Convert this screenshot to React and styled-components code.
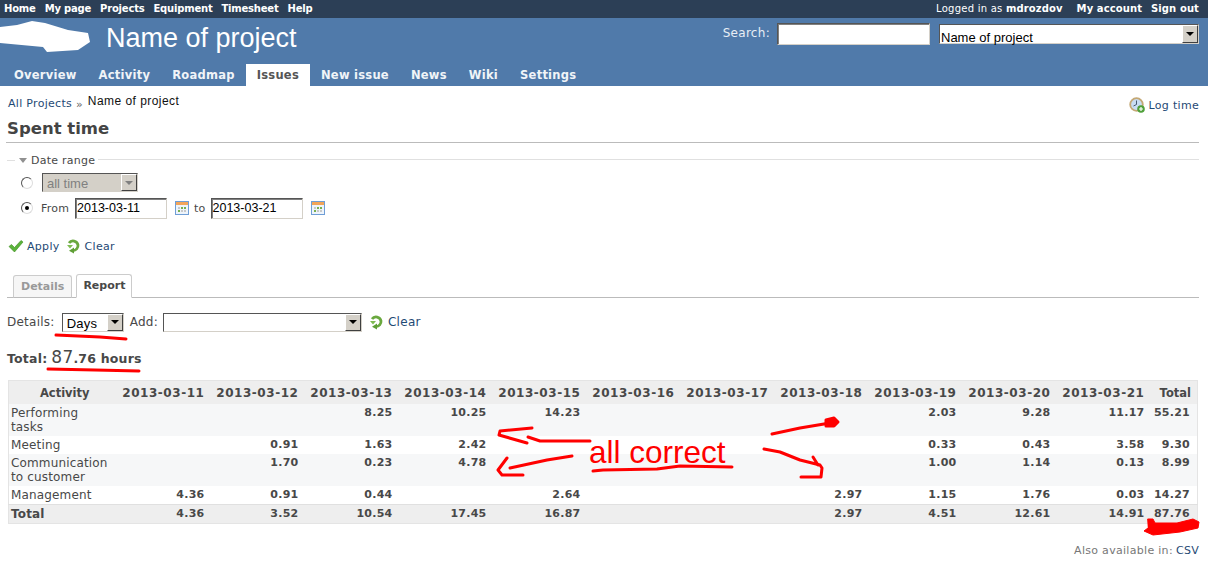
import styled, { createGlobalStyle } from "styled-components";

const GlobalStyle = createGlobalStyle`
  html, body {
    margin: 0;
    padding: 0;
    background: #fff;
    color: #484848;
    font-family: "DejaVu Sans", Verdana, sans-serif;
    font-size: 11px;
  }
`;

const Page = styled.div`
  position: relative;
  width: 1208px;
  height: 575px;
  overflow: hidden;
`;

const TopMenu = styled.div`
  height: 18px;
  background: #2c3f56;
  display: flex;
  justify-content: space-between;
  align-items: center;
  padding: 0 9px 2px 4px;
  box-sizing: border-box;
  color: #fff;
  font-size: 10px;
`;

const TopLinks = styled.div`
  display: flex;
  gap: 9px;
  font-weight: bold;
  letter-spacing: ${(p) => p.$ls}px;
`;

const LoggedAs = styled.span`
  font-weight: normal;
  letter-spacing: 0.25px;
  margin-right: 5px;
  b {
    font-weight: bold;
    letter-spacing: 0.1px;
  }
`;

const Header = styled.div`
  height: 68px;
  background: #507aaa;
  display: flex;
  flex-direction: column;
  justify-content: space-between;
`;

const HeaderTop = styled.div`
  display: flex;
  justify-content: space-between;
  align-items: flex-start;
  padding: 0 9px 0 0;
`;

const Brand = styled.div`
  display: flex;
  align-items: center;
  height: 40px;
`;

const Title = styled.h1`
  margin: 0 0 0 106px;
  font: normal 27px "Liberation Sans", Arial, sans-serif;
  color: #fff;
`;

const Blob = styled.svg`
  position: absolute;
  left: 0;
  top: 20px;
`;

const QuickSearch = styled.div`
  display: flex;
  align-items: flex-start;
  padding-top: 5px;
  color: #e8eef5;
  font-size: 12px;
`;

const SearchLabel = styled.span`
  margin-right: 7px;
  line-height: 20px;
  letter-spacing: 0.3px;
`;

const Field = styled.div`
  box-sizing: border-box;
  width: ${(p) => p.$w}px;
  height: ${(p) => p.$h || 22}px;
  border: 1px solid;
  border-color: #555 #d4d0c8 #d4d0c8 #555;
  box-shadow: inset 1px 1px 0 #808080;
  background: #fff;
  color: #000;
  font: 12.5px/${(p) => (p.$h || 22) - 3}px "Liberation Sans", Arial, sans-serif;
  padding-left: 1px;
  white-space: nowrap;
`;

const SelectBox = styled.div`
  box-sizing: border-box;
  width: ${(p) => p.$w}px;
  height: ${(p) => p.$h || 19}px;
  margin: ${(p) => p.$m || "0"};
  flex: none;
  border: 1px solid;
  border-color: #555 #d4d0c8 #d4d0c8 #555;
  background: ${(p) => (p.$disabled ? "#d4d0c8" : "#fff")};
  color: ${(p) => (p.$disabled ? "#808080" : "#000")};
  display: flex;
  align-items: stretch;
  justify-content: space-between;
  font: 13px "Liberation Sans", Arial, sans-serif;
`;

const SelectText = styled.span`
  padding-left: ${(p) => p.$pl || 4}px;
  line-height: ${(p) => p.$lh || 20}px;
  white-space: nowrap;
`;

const SelectArrow = styled.span`
  width: 16px;
  flex: none;
  background: #d4d0c8;
  border: 1px solid;
  border-color: #fff #404040 #404040 #fff;
  box-sizing: border-box;
  display: flex;
  align-items: center;
  justify-content: center;
  &::after {
    content: "";
    border: 4px solid transparent;
    border-top: 4px solid ${(p) => (p.$disabled ? "#808080" : "#000")};
    border-bottom: 0;
  }
`;

const Tabs = styled.div`
  display: flex;
  height: 22px;
  padding-left: 3px;
  font-size: 11.5px;
  font-weight: bold;
  letter-spacing: 0.25px;
`;

const MainTab = styled.a`
  display: block;
  padding: 0 11px;
  line-height: 22px;
  color: ${(p) => (p.$active ? "#555" : "#f0f4f8")};
  background: ${(p) => (p.$active ? "#fff" : "transparent")};
`;

const Content = styled.div`
  padding: 0 9px 0 7px;
`;

const BreadRow = styled.div`
  display: flex;
  justify-content: space-between;
  height: 33px;
  padding-top: 11px;
  box-sizing: border-box;
`;

const Crumbs = styled.div`
  display: flex;
  align-items: flex-start;
  padding-left: 1px;
`;

const Lnk = styled.a`
  color: #1f4a75;
  letter-spacing: 0.3px;
`;

const CrumbSep = styled.span`
  margin: 1px 5px 0 4px;
  color: #666;
`;

const CrumbHere = styled.span`
  font: 12px "Liberation Sans", Arial, sans-serif;
  color: #111;
  position: relative;
  top: -3px;
  letter-spacing: 0.45px;
`;

const LogTime = styled.div`
  display: flex;
  align-items: center;
  gap: 4px;
  height: 16px;
`;

const PageTitle = styled.h2`
  margin: 0 0 0 -1px;
  height: 23px;
  padding-left: 1px;
  border-bottom: 1px solid #bbb;
  font-size: 16.5px;
  line-height: 20px;
  font-weight: bold;
  color: #444;
  box-sizing: content-box;
`;

const Legend = styled.div`
  display: flex;
  align-items: center;
  height: 14px;
  margin-top: 10px;
  color: #484848;
  letter-spacing: 0.25px;
  &::before {
    content: "";
    width: 8px;
    border-top: 1px solid #e0e0e0;
    margin-right: 4px;
  }
  &::after {
    content: "";
    flex: 1;
    border-top: 1px solid #e0e0e0;
    margin-left: 3px;
    position: relative;
    top: -1px;
  }
`;

const Caret = styled.span`
  width: 0;
  height: 0;
  border: 4px solid transparent;
  border-top: 5px solid #909090;
  border-bottom: 0;
  margin-right: 4px;
`;

const Range = styled.div`
  display: flex;
  flex-direction: column;
  gap: 5px;
  padding: 6px 0 0 14px;
`;

const RangeRow = styled.div`
  display: flex;
  align-items: center;
  height: ${(p) => p.$h}px;
`;

const Radio = styled.span`
  box-sizing: border-box;
  width: 12px;
  height: 12px;
  border-radius: 50%;
  border: 1px solid;
  border-color: #555 #ddd #ddd #555;
  background: #fff;
  margin-right: 9px;
  display: flex;
  align-items: center;
  justify-content: center;
  &::after {
    content: "";
    width: 4px;
    height: 4px;
    border-radius: 50%;
    background: ${(p) => (p.$on ? "#000" : "transparent")};
  }
`;

const RangeLabel = styled.span`
  margin: ${(p) => p.$m};
  letter-spacing: 0.2px;
`;

const Actions = styled.div`
  display: flex;
  align-items: center;
  height: 16px;
  margin: 19px 0 0 1px;
`;

const IconSlot = styled.span`
  display: inline-flex;
  margin: ${(p) => p.$m || "0 4px 0 0"};
`;

const TabBar = styled.div`
  display: flex;
  align-items: flex-end;
  gap: 4px;
  height: 24px;
  margin-top: 19px;
  padding-left: 6px;
  border-bottom: 1px solid #bbb;
`;

const TabItem = styled.div`
  box-sizing: border-box;
  height: ${(p) => (p.$active ? 24 : 23)}px;
  margin-bottom: -1px;
  padding: 0 ${(p) => (p.$active ? 6 : 7)}px;
  line-height: 21px;
  font-weight: bold;
  border: 1px solid #ccc;
  border-bottom-color: ${(p) => (p.$active ? "#fff" : "#bbb")};
  border-radius: 3px 3px 0 0;
  background: ${(p) => (p.$active ? "#fff" : "#f6f6f6")};
  color: ${(p) => (p.$active ? "#484848" : "#999")};
`;

const DetailsRow = styled.div`
  display: flex;
  align-items: center;
  height: 20px;
  margin-top: 14px;
  font-size: 12px;
  letter-spacing: 0.25px;
`;

const TotalLine = styled.div`
  margin-top: 15px;
  height: 20px;
  display: flex;
  align-items: baseline;
  font-size: 12.5px;
  font-weight: bold;
  letter-spacing: 0.2px;
  color: #484848;
`;

const BigNum = styled.span`
  font-size: 17px;
  font-weight: normal;
  margin-left: 4px;
`;

const Decimals = styled.span`
  font-size: 12.5px;
  font-weight: bold;
`;

const Table = styled.table`
  width: 1190px;
  margin: 13px 0 0 1px;
  border: 1px solid #e4e4e4;
  border-collapse: collapse;
  table-layout: fixed;
  color: #484848;
`;

const Th = styled.th`
  background: #eee;
  height: 23px;
  padding: 0 ${(p) => (p.$last ? 6 : p.$first ? 0 : 4)}px 0 ${(p) => (p.$first ? 6 : 0)}px;
  text-align: ${(p) => (p.$first ? "center" : "right")};
  font-size: ${(p) => (p.$first || p.$last ? 11.5 : 12)}px;
  letter-spacing: ${(p) => (p.$first || p.$last ? 0 : 0.55)}px;
  font-weight: bold;
`;

const Row = styled.tr`
  background: ${(p) => (p.$total ? "#eee" : p.$odd ? "#f6f7f8" : "#fff")};
  ${(p) => p.$total && "border-top: 1px solid #e0e0e0;"}
`;

const NameCell = styled.td`
  padding: 2px 0 2px 2px;
  vertical-align: top;
  font-size: 12px;
  line-height: 14px;
  font-weight: ${(p) => (p.$total ? "bold" : "normal")};
  letter-spacing: 0.15px;
`;

const Hours = styled.td`
  padding: 2px ${(p) => (p.$last ? 7 : 4)}px 0 0;
  vertical-align: top;
  text-align: right;
  font-weight: bold;
  font-size: 11px;
  line-height: 14px;
  letter-spacing: 0.25px;
`;

const Footer = styled.div`
  display: flex;
  justify-content: flex-end;
  margin-top: 20px;
  color: #777;
  letter-spacing: 0.3px;
  gap: 3px;
`;

const Scribble = styled.svg`
  position: absolute;
  left: 0;
  top: 0;
  pointer-events: none;
`;

const Note = styled.span`
  position: absolute;
  left: 589px;
  top: 432px;
  font: 31.5px/40px "Liberation Sans", Arial, sans-serif;
  color: #f00;
`;

const CheckIcon = () => (
  <svg width="16" height="16" viewBox="0 0 16 16">
    <path d="M1 8.5 L3.5 6.5 L6.5 9.5 L13 2.5 L15 4 L6.5 14 Z" fill="#5bb33c" stroke="#3d8a1c" strokeWidth="0.6" />
  </svg>
);

const ReloadIcon = () => (
  <svg width="16" height="16" viewBox="0 0 16 16" fill="none">
    <path d="M4 5 A5 5 0 0 1 13 7 A5 5 0 0 1 8 12.5" stroke="#6aa83e" strokeWidth="2.8" />
    <path d="M2 7 L8 7 L5 10.5 Z" fill="#7fbb52" />
    <path d="M9 9.5 L4 12.7 L9 15.5 Z" fill="#5f9e36" />
  </svg>
);

const CalendarIcon = () => (
  <svg width="14" height="14" viewBox="0 0 14 14">
    <rect x="0.5" y="0.5" width="13" height="13" fill="#eef4fb" stroke="#6f9ed6" />
    <rect x="1" y="1" width="12" height="3" fill="#f2a55a" />
    <rect x="3" y="6" width="2" height="2" fill="#c9c9c9" />
    <rect x="6" y="6" width="2" height="2" fill="#78b04e" />
    <rect x="9" y="6" width="2" height="2" fill="#78b04e" />
    <rect x="3" y="9" width="2" height="2" fill="#78b04e" />
    <rect x="6" y="9" width="2" height="2" fill="#c9c9c9" />
    <rect x="9" y="9" width="2" height="2" fill="#c9c9c9" />
  </svg>
);

const ClockIcon = () => (
  <svg width="16" height="16" viewBox="0 0 16 16">
    <circle cx="7.5" cy="7.5" r="6.3" fill="#c8dcf2" stroke="#c4a875" strokeWidth="1.8" />
    <path d="M7.5 3.5 V7.5 L4.5 9" stroke="#46586e" strokeWidth="1" fill="none" />
    <circle cx="12" cy="12" r="3.8" fill="#4fa03a" />
    <path d="M12 10 V14 M10 12 H14" stroke="#fff" strokeWidth="1.2" />
  </svg>
);

const dates = [
  "2013-03-11", "2013-03-12", "2013-03-13", "2013-03-14", "2013-03-15", "2013-03-16",
  "2013-03-17", "2013-03-18", "2013-03-19", "2013-03-20", "2013-03-21",
];

const rows = [
  { name: <>Performing<br />tasks</>, v: ["", "", "8.25", "10.25", "14.23", "", "", "", "2.03", "9.28", "11.17", "55.21"] },
  { name: "Meeting", v: ["", "0.91", "1.63", "2.42", "", "", "", "", "0.33", "0.43", "3.58", "9.30"] },
  { name: <>Communication<br />to customer</>, v: ["", "1.70", "0.23", "4.78", "", "", "", "", "1.00", "1.14", "0.13", "8.99"] },
  { name: "Management", v: ["4.36", "0.91", "0.44", "", "2.64", "", "", "2.97", "1.15", "1.76", "0.03", "14.27"] },
];

const totals = ["4.36", "3.52", "10.54", "17.45", "16.87", "", "", "2.97", "4.51", "12.61", "14.91", "87.76"];

export default function App() {
  return (
    <Page>
      <GlobalStyle />
      <TopMenu>
        <TopLinks $ls={-0.2}>
          <span>Home</span>
          <span>My page</span>
          <span>Projects</span>
          <span>Equipment</span>
          <span>Timesheet</span>
          <span>Help</span>
        </TopLinks>
        <TopLinks $ls={0.1}>
          <LoggedAs>Logged in as <b>mdrozdov</b></LoggedAs>
          <span>My account</span>
          <span>Sign out</span>
        </TopLinks>
      </TopMenu>
      <Header>
        <HeaderTop>
          <Brand>
            <Title>Name of project</Title>
          </Brand>
          <QuickSearch>
            <SearchLabel>Search:</SearchLabel>
            <Field $w={153} />
            <SelectBox $w={260} $h={20} $m="1px 0 0 9px">
              <SelectText $pl={1} $lh={26}>Name of project</SelectText>
              <SelectArrow />
            </SelectBox>
          </QuickSearch>
        </HeaderTop>
        <Tabs>
          <MainTab>Overview</MainTab>
          <MainTab>Activity</MainTab>
          <MainTab>Roadmap</MainTab>
          <MainTab $active>Issues</MainTab>
          <MainTab>New issue</MainTab>
          <MainTab>News</MainTab>
          <MainTab>Wiki</MainTab>
          <MainTab>Settings</MainTab>
        </Tabs>
      </Header>
      <Blob width="92" height="34" viewBox="0 0 92 34">
        <path d="M0 7 L17 5 L32 1 L45 3 L68 10 L88 13 L90 22 L78 30 L47 32 L43 27 L0 23 Z" fill="#fff" />
      </Blob>
      <Content>
        <BreadRow>
          <Crumbs>
            <Lnk>All Projects</Lnk>
            <CrumbSep>»</CrumbSep>
            <CrumbHere>Name of project</CrumbHere>
          </Crumbs>
          <LogTime>
            <ClockIcon />
            <Lnk>Log time</Lnk>
          </LogTime>
        </BreadRow>
        <PageTitle>Spent time</PageTitle>
        <Legend>
          <Caret />
          Date range
        </Legend>
        <Range>
          <RangeRow $h={19}>
            <Radio />
            <SelectBox $w={96} $disabled>
              <SelectText>all time</SelectText>
              <SelectArrow $disabled />
            </SelectBox>
          </RangeRow>
          <RangeRow $h={22}>
            <Radio $on />
            <RangeLabel $m="0 6px 0 -1px">From</RangeLabel>
            <Field $w={92} $h={21}>2013-03-11</Field>
            <IconSlot $m="0 5px 0 8px"><CalendarIcon /></IconSlot>
            <RangeLabel $m="0 5px 0 0">to</RangeLabel>
            <Field $w={92} $h={21}>2013-03-21</Field>
            <IconSlot $m="0 0 0 8px"><CalendarIcon /></IconSlot>
          </RangeRow>
        </Range>
        <Actions>
          <IconSlot $m="0 3px 0 0"><CheckIcon /></IconSlot>
          <Lnk>Apply</Lnk>
          <IconSlot $m="0 4px 0 5px"><ReloadIcon /></IconSlot>
          <Lnk>Clear</Lnk>
        </Actions>
        <TabBar>
          <TabItem>Details</TabItem>
          <TabItem $active>Report</TabItem>
        </TabBar>
        <DetailsRow>
          <span>Details:</span>
          <SelectBox $w={62} $m="0 6px 0 7px">
            <SelectText>Days</SelectText>
            <SelectArrow />
          </SelectBox>
          <span>Add:</span>
          <SelectBox $w={199} $m="0 6px 0 5px">
            <SelectText />
            <SelectArrow />
          </SelectBox>
          <IconSlot $m="0 4px 0 0"><ReloadIcon /></IconSlot>
          <Lnk>Clear</Lnk>
        </DetailsRow>
        <TotalLine>
          Total:
          <BigNum>87<Decimals>.76 hours</Decimals></BigNum>
        </TotalLine>
        <Table>
          <colgroup>
            <col style={{ width: 106 }} />
            {dates.map((d) => <col key={d} style={{ width: 94 }} />)}
            <col />
          </colgroup>
          <thead>
            <tr>
              <Th $first>Activity</Th>
              {dates.map((d) => <Th key={d}>{d}</Th>)}
              <Th $last>Total</Th>
            </tr>
          </thead>
          <tbody>
            {rows.map((r, i) => (
              <Row key={i} $odd={i % 2 === 0}>
                <NameCell>{r.name}</NameCell>
                {r.v.map((x, j) => <Hours key={j} $last={j === 11}>{x}</Hours>)}
              </Row>
            ))}
            <Row $total>
              <NameCell $total>Total</NameCell>
              {totals.map((x, j) => <Hours key={j} $last={j === 11}>{x}</Hours>)}
            </Row>
          </tbody>
        </Table>
        <Footer>
          Also available in: <Lnk>CSV</Lnk>
        </Footer>
      </Content>
      <Note>all correct</Note>
      <Scribble width="1208" height="575" viewBox="0 0 1208 575" fill="none" stroke="#f00" strokeWidth="3" strokeLinejoin="round" strokeLinecap="round">
        <path d="M56 335 L100 337 L126 339" />
        <path d="M48 369 L95 370 L139 371" />
        <path d="M593 471 L603 470 L657 469 L680 466 L732 467" />
        <path d="M590 441 L540 441 L528 437" />
        <path d="M532 428 L500 431 L499 435 L527 443" />
        <path d="M572 456 L547 460 L510 468" />
        <path d="M507 458 L498 470 L502 475 L523 475" />
        <path d="M772 434 L800 428 L830 423" />
        <path d="M826 420 L834 418 L838 422 L834 426 L826 426 Z" fill="#f00" />
        <path d="M764 449 L780 452 L800 460 L820 465 L822 468 L821 477 L801 477" />
        <path d="M813 457 L818 465" />
        <path d="M1148 519 L1153 519 L1155 523 L1177 523 L1193 519 L1199 522 L1198 528 L1180 532 L1153 535 L1144 531 L1148 528 Z" fill="#f00" strokeWidth="1" />
      </Scribble>
    </Page>
  );
}
